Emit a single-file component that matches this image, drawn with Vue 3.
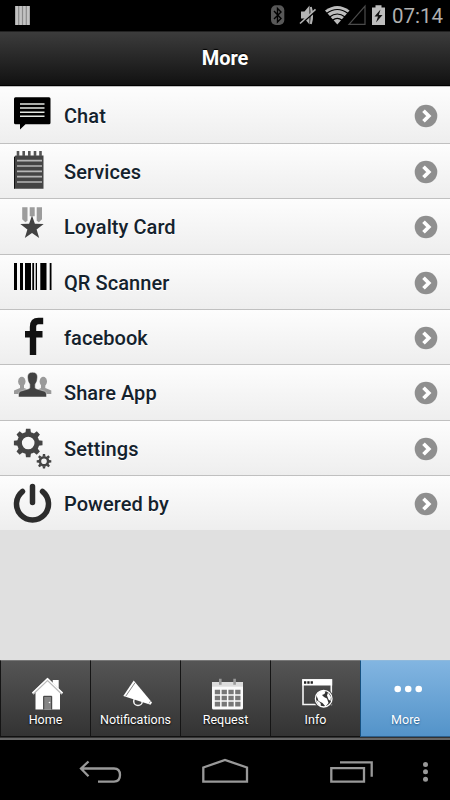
<script setup>
import { ref } from 'vue'

const rows = [
  { id: 'chat', label: 'Chat' },
  { id: 'services', label: 'Services' },
  { id: 'loyalty', label: 'Loyalty Card' },
  { id: 'qr', label: 'QR Scanner' },
  { id: 'facebook', label: 'facebook' },
  { id: 'share', label: 'Share App' },
  { id: 'settings', label: 'Settings' },
  { id: 'power', label: 'Powered by' },
]

const tabs = [
  { id: 'home', label: 'Home' },
  { id: 'notifications', label: 'Notifications' },
  { id: 'request', label: 'Request' },
  { id: 'info', label: 'Info' },
  { id: 'more', label: 'More' },
]

const activeTab = ref('more')

const teeth = [0, 45, 90, 135, 180, 225, 270, 315]
</script>

<template>
  <div class="screen">
    <div class="status">
      <svg class="status__icons" width="390" height="31" viewBox="0 0 390 31">
        <rect x="15" y="6" width="15" height="19" fill="#8a8a8a" />
        <path d="M16.8 6v19M20.6 6v19M24.4 6v19M28.2 6v19" stroke="#c2c2c2" stroke-width="2.6" />
        <rect x="271" y="5.300" width="13.300" height="19.700" rx="5" fill="#585858" />
        <path d="M274 11l7 7.500-3.500 3.500V8.500L281 12l-7 7" fill="none" stroke="#000" stroke-width="1.400" />
        <path d="M301 11.500h3.500l5-6v19l-5-6H301zM310.500 7.500q5 8 0 15.500" fill="#b3b3b3" />
        <path d="M310.800 7q2.600 8 0 17" fill="none" stroke="#b3b3b3" stroke-width="2" />
        <path d="M299 25.500L316 10.500" stroke="#000" stroke-width="2" />
        <path d="M300 23.500L315.500 9.300" stroke="#b3b3b3" stroke-width="1.600" />
        <path d="M325 10.500q12.300-9 24.600 0L337.300 24.500z" fill="#bdbdbd" />
        <path d="M326.500 13.500q10.800-8 21.600 0M329.500 17q7.800-6 15.600 0M332.500 20.300q4.800-4 9.600 0" fill="none" stroke="#000" stroke-width="1.200" />
        <path d="M349 24.300H365V6z" fill="none" stroke="#4b4b4b" stroke-width="1.200" />
        <path d="M372 7.500h3.500V5.300h6v2.200h3.500V25h-13z" fill="#bdbdbd" />
        <path d="M380.500 9.500l-6 7h3.500l-2 6 6.500-7.500h-3.700z" fill="#111" />
      </svg>
      <span class="status__time">07:14</span>
    </div>

    <header class="header">More</header>

    <ul class="list">
      <li v-for="row in rows" :key="row.id" class="list__row">
        <svg class="list__icon" width="64" height="54" viewBox="0 1 64 54">
          <template v-if="row.id === 'chat'">
            <path d="M15.500 11.200h33.500q1.500 0 1.500 1.500v24q0 1.500-1.500 1.500H25.500L20 43.500v-5.300h-4.500q-1.500 0-1.500-1.500v-24q0-1.500 1.500-1.500z" fill="#000" />
            <path d="M20 18h24.500M20 22h24.500M20 26.200h24.500M20 30.200h24.500" stroke="#e4e7e2" stroke-width="1.400" />
          </template>
          <template v-else-if="row.id === 'services'">
            <path d="M15.500 12.500h28V45.700H14V14z" fill="#444" />
            <path d="M14.500 14v31.500" stroke="#111" />
            <path d="M18 8v5M23.700 8v5M29.300 8v5M35 8v5M40.500 8v5" stroke="#555" stroke-width="2.600" />
            <path d="M17 17.700h25M17 23h25M17 28.300h25M17 33.700h25M17 39h25" stroke="#b5b5b5" stroke-width="1.700" />
          </template>
          <template v-else-if="row.id === 'loyalty'">
            <path d="M22.200 9.300h5.300v13.500l-2.200 1.500-3.100-3zM29.700 9.300h5v9h-5zM36.700 9.300H42v12l-3.100 3-2.200-1.500z" fill="#9c9c9c" />
            <path d="M32 17.500l2.900 8.300 8.800.1-7.100 5.500 2.600 8.600-7.200-5.100-7.200 5.100 2.600-8.600-7.100-5.500 8.800-.1z" fill="#424242" />
          </template>
          <template v-else-if="row.id === 'qr'">
            <path d="M14 9h3v27h-3zM20 9h3v27h-3zM25 9h6v27h-6zM32.300 9h1.800v27h-1.800zM35.700 9H37v27h-1.300zM40.300 9h6.200v27h-6.200zM49.700 9h1.800v27h-1.800z" fill="#000" />
          </template>
          <template v-else-if="row.id === 'facebook'">
            <path d="M33 46V18q0-6 5.500-6h4.700M25 25.200h17.500" fill="none" stroke="#111" stroke-width="6.400" />
          </template>
          <template v-else-if="row.id === 'share'">
            <g fill="#9a9a9a">
              <ellipse cx="21.800" cy="17.500" rx="3.700" ry="4.700" />
              <ellipse cx="43.300" cy="17.500" rx="3.700" ry="4.700" />
              <path d="M20 20h4v4l5 2v4H14v-3.500l6-2.500zM41 20h4.300v4l6 2.500V30H37v-4l4-2z" />
            </g>
            <path d="M27.500 13q0-4.800 5-4.800t5 4.800q0 5-2.300 7.500v3q0 1 2 1.600l7 2q2.300.7 2.300 3V33h-28v-2.900q0-2.300 2.300-3l7-2q2-.6 2-1.600v-3q-2.300-2.500-2.300-7.500z" fill="#424242" stroke="#f6f6f6" stroke-width=".5" />
          </template>
          <template v-else-if="row.id === 'settings'">
            <g fill="#444" transform="translate(28.200 23)">
              <circle r="8.700" fill="none" stroke="#444" stroke-width="4.800" />
              <path v-for="t in teeth" :key="t" d="M-2.800-10l.6-4.300h4.400l.6 4.300z" :transform="`rotate(${t})`" />
            </g>
            <g fill="#444" transform="translate(44 41.300)">
              <circle r="4.100" fill="none" stroke="#444" stroke-width="2.600" />
              <path v-for="t in teeth" :key="t" d="M-1.400-5l.3-2.300h2.200l.3 2.300z" :transform="`rotate(${t})`" />
            </g>
          </template>
          <template v-else>
            <path d="M22.500 16.500A16 16 0 1 0 42.500 16.500M32.500 11.500v16" fill="none" stroke="#2c2c2c" stroke-width="5.500" stroke-linecap="round" />
          </template>
        </svg>
        <span class="list__label">{{ row.label }}</span>
        <svg class="list__arrow" width="24" height="24" viewBox="0 0 24 24">
          <circle cx="12" cy="12" r="11.300" fill="#8f8f8f" />
          <path d="M9.500 6.700l5.300 5.300-5.300 5.300" fill="none" stroke="#fff" stroke-width="3.700" />
        </svg>
      </li>
    </ul>

    <nav class="tabs">
      <button
        v-for="tab in tabs"
        :key="tab.id"
        class="tabs__item"
        :class="{ 'tabs__item--active': tab.id === activeTab }"
        @click="activeTab = tab.id"
      >
        <svg width="89" height="51" viewBox="1 1 89 51">
          <template v-if="tab.id === 'home'">
            <path d="M52.700 20h6v12h-6z" fill="#fff" />
            <path d="M35.500 32l12-12 12.500 12v17.500H35.500z" fill="#fff" />
            <path d="M32.700 33.700L47.500 19.500l14.800 14.200" fill="none" stroke="#bbb" stroke-width="2.600" />
            <path d="M32.500 33L47.500 18.700 62.500 33" fill="none" stroke="#fff" stroke-width="1.500" />
            <path d="M43.700 49.500V36.300h8v13.200" fill="#858585" stroke="#333" />
            <circle cx="49.500" cy="42.500" r=".8" fill="#fff" />
          </template>
          <template v-else-if="tab.id === 'notifications'">
            <circle cx="48" cy="41.300" r="4.300" fill="none" stroke="#f2f2f2" stroke-width="1.500" />
            <path d="M33.300 36L43.700 20.500l18.300 22-1.500 2.300z" fill="#fff" />
            <path d="M35.700 36.300L45 22.700" stroke="#777" stroke-width=".9" />
            <path d="M58.800 43.500l1.800-2.500" stroke="#999" stroke-width=".8" />
          </template>
          <template v-else-if="tab.id === 'request'">
            <rect x="32" y="22" width="31" height="27.500" rx="1.500" fill="#fafafa" />
            <path d="M32 22h31v4.700H32z" fill="#dcdcdc" />
            <path d="M40.300 18.800v6M54.600 18.800v6" stroke="#999" stroke-width="2.600" />
            <path d="M34.800 32h26M34.800 38h26M34.800 44.100h26" stroke="#777" stroke-width="4.700" stroke-dasharray="5.300 1.500" />
          </template>
          <template v-else-if="tab.id === 'info'">
            <path d="M33 20h28.300v24.500H33z" fill="none" stroke="#f5f5f5" stroke-width="1.600" />
            <path d="M32.200 19.200h30v6.300h-30z" fill="#fff" />
            <path d="M34 22.500h2.300M37.300 22.500h2.300M40.600 22.500h2.300" stroke="#222" stroke-width="2.300" />
            <circle cx="53.700" cy="38.700" r="10" fill="#444" />
            <circle cx="53.700" cy="38.700" r="8.300" fill="#333" stroke="#fff" stroke-width="1.300" />
            <path d="M46.500 36q2-5 6-5.500l3 1-1 2.500-2.500 1 2 2 3 1.500 1.500 4.500-3 3.500-3-3.500-4-2-1-3zM58 32.500l3 4.500-.5 4-2-1.500-1.500-4zM46.500 40l4 3 .5 3q-4-1.500-4.500-6z" fill="#fff" />
          </template>
          <g v-else fill="#fff">
            <circle cx="37.700" cy="29" r="3.300" />
            <circle cx="48.200" cy="29" r="3.300" />
            <circle cx="58.700" cy="29" r="3.300" />
          </g>
        </svg>
        <span class="tabs__label">{{ tab.label }}</span>
      </button>
    </nav>

    <div class="navbar">
      <svg width="450" height="60" viewBox="0 0 450 60" fill="none" stroke="#999" stroke-width="2.300">
        <path d="M88.500 21.500L81 28.500l7.500 7.700M81 28.500h33q6 0 6 6.600t-6 6.600H98" />
        <path d="M203.300 27.500L225 20l22 7.500v14.200h-43.700z" />
        <path d="M331.300 28.200H364v13.400h-32.700zM340 22.400h31.700v14.300" />
        <g fill="#999" stroke="none">
          <circle cx="425.500" cy="24.400" r="2.500" />
          <circle cx="425.500" cy="31.800" r="2.500" />
          <circle cx="425.500" cy="39.200" r="2.500" />
        </g>
      </svg>
    </div>
  </div>
</template>

<style>
body {
  margin: 0;
}
</style>

<style scoped>
.screen {
  display: flex;
  flex-direction: column;
  width: 450px;
  height: 800px;
  overflow: hidden;
  background: #e0e0e0;
  font-family: Roboto, 'Liberation Sans', sans-serif;
}

.status {
  display: flex;
  height: 31px;
  flex: none;
  background: #000;
}

.status__time {
  padding-left: 2px;
  color: #b0b0b0;
  font-size: 20.5px;
  line-height: 32px;
}

.header {
  flex: none;
  box-sizing: border-box;
  height: 55px;
  border-top: 1px solid #222;
  border-bottom: 1px solid #000;
  background: linear-gradient(#3c3c3c, #111);
  color: #fff;
  font-size: 20px;
  font-weight: 700;
  line-height: 53px;
  text-align: center;
  text-shadow: 0 -1px 1px #000;
}

.list {
  display: grid;
  flex: none;
  grid-template-rows: 57px 55px 56px 55px 55px 56px 55px 55px;
  margin: 0;
  padding: 0;
  list-style: none;
}

.list__row {
  display: flex;
  align-items: flex-start;
  padding-right: 12px;
  border-top: 1px solid #c0c0c0;
  background: linear-gradient(#fdfdfd, #eee);
}

.list__label {
  flex: 1;
  color: #14222d;
  font-size: 20px;
  font-weight: 500;
  letter-spacing: 0.06px;
  line-height: 56px;
  text-shadow: 0 1px 0 #fff;
}

.list__arrow {
  margin-top: 15.5px;
}

.list__row:first-child .list__label {
  line-height: 58px;
}

.list__row:first-child .list__arrow {
  margin-top: 17px;
}

.tabs {
  display: flex;
  flex: none;
  box-sizing: border-box;
  height: 80px;
  margin-top: auto;
  border-bottom: 2px solid #666;
  background: #333;
}

.tabs__item {
  display: flex;
  flex: 1;
  flex-direction: column;
  align-items: center;
  height: 77px;
  padding: 0;
  border: 0;
  border-top: 1px solid #777;
  border-left: 1px solid #151515;
  border-bottom: 1px solid #111;
  box-sizing: border-box;
  background: linear-gradient(#555, #333);
  color: #fff;
  font: 12.5px Roboto, 'Liberation Sans', sans-serif;
  text-shadow: 0 1px 2px #000;
}

.tabs__item--active {
  border-color: #8fb9dc #1b5178 #2c5f8d #155080;
  background: linear-gradient(#82b5e1, #5393c9);
  text-shadow: 0 1px 2px #1f588a;
}

.tabs__label {
  line-height: 16px;
}

.navbar {
  flex: none;
  height: 60px;
  background: #000;
}
</style>
